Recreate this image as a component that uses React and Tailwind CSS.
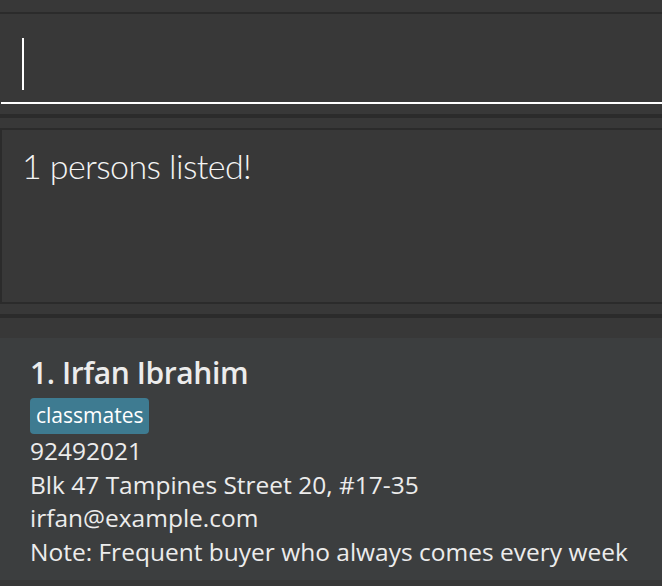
import React from 'react'

const person = {
  name: 'Irfan Ibrahim',
  tags: ['classmates'],
  phone: '92492021',
  address: 'Blk 47 Tampines Street 20, #17-35',
  email: 'irfan@example.com',
  note: 'Note: Frequent buyer who always comes every week',
}

const segoe = { fontFamily: '"Segoe UI", "Open Sans", "Noto Sans", sans-serif' }

export default function App() {
  return (
    <div className="w-[662px] h-[586px] overflow-hidden bg-[#383838] flex flex-col text-white">
      {/* top strip + divider */}
      <div className="h-[12px] shrink-0" />
      <div className="h-[2px] shrink-0 bg-[#2b2b2b]" />

      {/* command box */}
      <div className="h-[100px] shrink-0 flex flex-col">
        <div className="h-[90px] ml-[1px] border-b-2 border-white flex items-start pt-[24px] pl-[21px]">
          <span className="w-[2px] h-[52px] bg-white" />
        </div>
      </div>

      <div className="h-[4px] shrink-0 bg-[#2b2b2b]" />
      <div className="h-[10px] shrink-0" />

      {/* result display */}
      <div className="h-[176px] shrink-0 border-2 border-r-0 border-[#2b2b2b] px-[20px] pt-[14px]">
        <p className="text-[34px] leading-[44px] font-light tracking-[-0.6px] text-[#f4f4f4]" style={{ fontFamily: '"Segoe UI Light", Lato, "Open Sans", sans-serif' }}>
          1 persons listed!
        </p>
      </div>

      <div className="h-[10px] shrink-0" />
      <div className="h-[4px] shrink-0 bg-[#2b2b2b]" />
      <div className="h-[20px] shrink-0" />

      {/* person card */}
      <div className="h-[242px] shrink-0 bg-[#3c3e3f] pl-[30px] pt-[12px] text-[#ececec]" style={segoe}>
        <div className="text-[30px] leading-[46px] font-semibold tracking-[-0.4px]">1. {person.name}</div>
        <div className="flex gap-2 mt-[2px]">
          {person.tags.map((t) => (
            <span key={t} className="bg-[#3e7b91] text-white rounded-[4px] px-[6px] h-[36px] flex items-center text-[21px]">
              {t}
            </span>
          ))}
        </div>
        <div className="text-[24.5px] leading-[33.5px]">
          <div>{person.phone}</div>
          <div>{person.address}</div>
          <div>{person.email}</div>
          <div>{person.note}</div>
        </div>
      </div>
    </div>
  )
}
